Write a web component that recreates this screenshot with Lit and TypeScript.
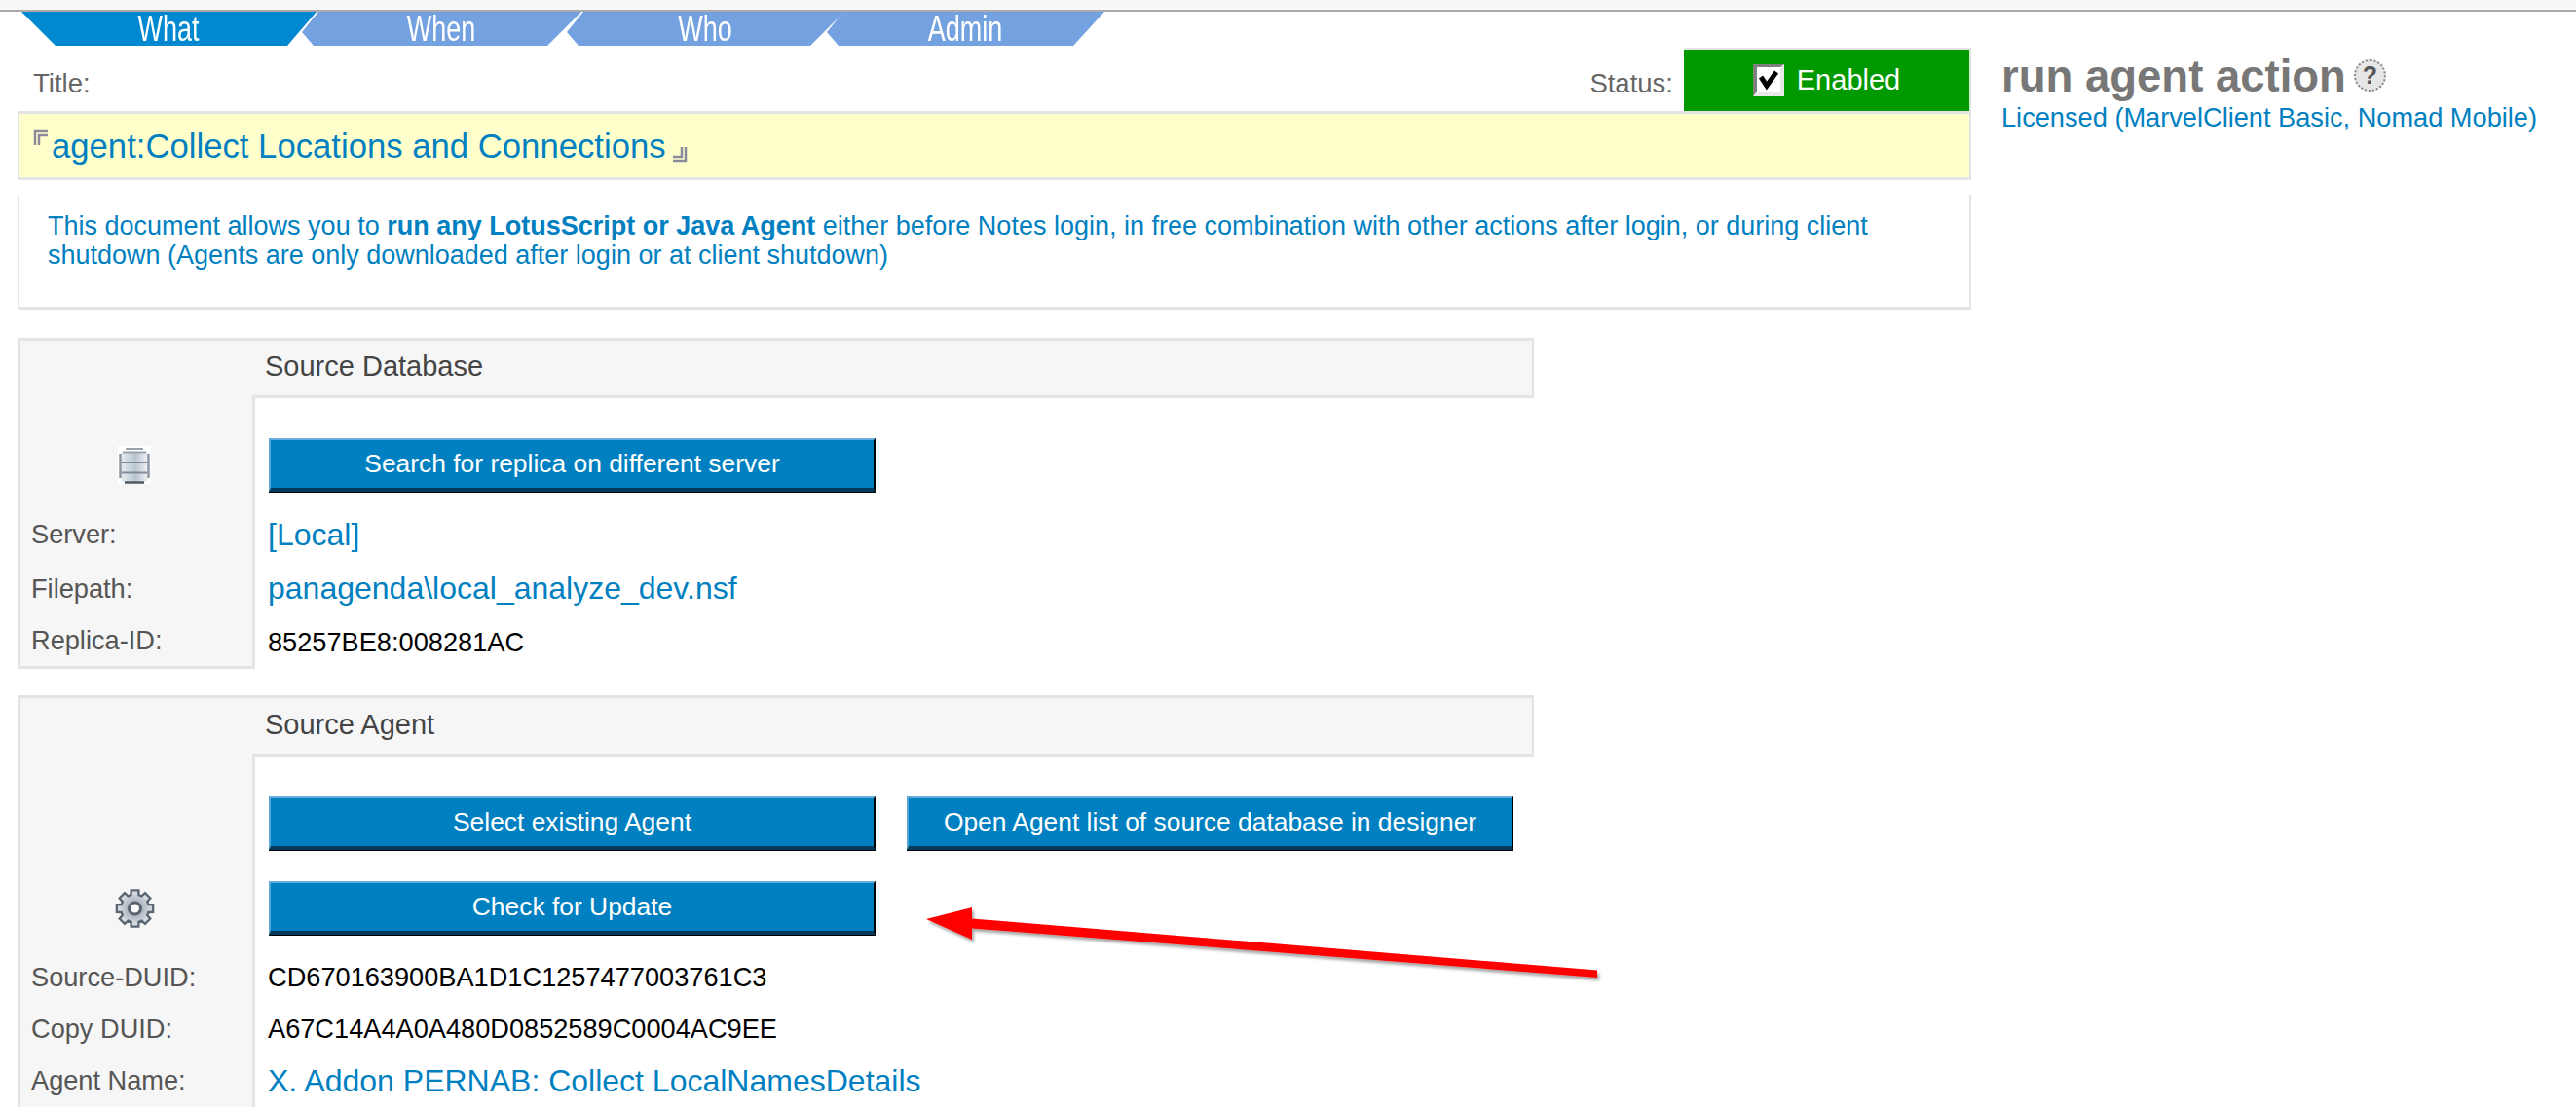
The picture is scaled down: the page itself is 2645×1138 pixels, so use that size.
import { LitElement, html, css, svg } from "lit";
import { customElement } from "lit/decorators.js";

const gearPath = (() => {
  const cx = 20.5, cy = 20, teeth = 8;
  let d = "";
  for (let i = 0; i < teeth; i++) {
    const a = (i / teeth) * Math.PI * 2 - Math.PI / 2;
    const pts: [number, number][] = [
      [14.5, -0.28],
      [19, -0.2],
      [19, 0.2],
      [14.5, 0.28],
    ];
    for (const [r, o] of pts) {
      const x = cx + r * Math.cos(a + o);
      const y = cy + r * Math.sin(a + o);
      d += (d ? "L" : "M") + x.toFixed(1) + " " + y.toFixed(1);
    }
  }
  return d + "Z";
})();

@customElement("app-root")
export class AppRoot extends LitElement {
  static styles = css`
    :host {
      display: block;
      position: relative;
      height: 1138px;
      overflow: hidden;
      background: #fff;
      font-family: "Liberation Sans", Arial, sans-serif;
      color: #666;
    }
    .strip {
      height: 10px;
      background: #f8f8f8;
      border-bottom: 2px solid #aaa;
    }
    .tabs {
      display: flex;
      height: 35px;
      padding-left: 22px;
    }
    .tab {
      display: flex;
      align-items: center;
      justify-content: center;
      color: #fff;
      background: #74a2e0;
      height: 35px;
    }
    .tab span {
      display: block;
      font-size: 36px;
      line-height: 35px;
      transform: scaleX(0.75);
    }
    .tab.what {
      width: 303px;
      background: #0088d0;
      clip-path: polygon(0 0, 100% 0, 273px 100%, 35px 100%);
    }
    .tab.when {
      width: 287px;
      margin-left: -15px;
      clip-path: polygon(17px 0, 100% 0, 252px 100%, 12px 100%, 0 60%);
    }
    .tab.who {
      width: 285px;
      margin-left: -15px;
      clip-path: polygon(17px 0, 100% 0, 250px 100%, 12px 100%, 0 60%);
    }
    .tab.admin {
      width: 285px;
      margin-left: -18px;
      clip-path: polygon(17px 0, 100% 0, 253px 100%, 12px 100%, 0 60%);
    }
    .main {
      display: flex;
      gap: 31px;
      padding: 2px 0 0 18px;
    }
    .left {
      width: 2006px;
      flex: none;
    }
    .status-row {
      display: flex;
      align-items: center;
      height: 65px;
      padding-left: 16px;
      font-size: 27.5px;
    }
    .status-row .lbl {
      padding-top: 9px;
    }
    .status-row .grow {
      flex: 1;
    }
    .status-row .st {
      margin-right: 11px;
    }
    .status {
      box-sizing: border-box;
      width: 295px;
      height: 65px;
      display: flex;
      align-items: center;
      justify-content: center;
      gap: 13px;
      background: #009900;
      border-top: 2px solid #e4e4e4;
      border-right: 2px solid #d8e8d8;
      color: #fff;
      font-size: 29px;
    }
    .check {
      box-sizing: border-box;
      width: 32px;
      height: 33px;
      background: #fff;
      border-style: solid;
      border-width: 3px 4px 5px 4px;
      border-color: #808080 #e8e8e8 #e8e8e8 #808080;
      display: block;
    }
    .check svg {
      display: block;
    }
    .title-box {
      box-sizing: border-box;
      height: 71px;
      background: #ffffcc;
      border: solid #e4e4e4;
      border-width: 3px 2px 3px 2px;
      display: flex;
      align-items: center;
      padding-left: 14px;
      color: #0080c0;
      font-size: 34.7px;
      margin-bottom: 15px;
    }
    .title-box .open {
      align-self: flex-start;
      margin: 16px 3px 0 0;
    }
    .title-box .close {
      align-self: flex-end;
      margin: 0 0 15px 6px;
    }
    .title-box svg {
      display: block;
    }
    .title-box .txt {
      line-height: 40px;
      padding-top: 1px;
    }
    .desc {
      box-sizing: border-box;
      height: 118px;
      border: solid #e4e4e4;
      border-width: 0 2px 3px 2px;
      padding: 17px 29px 0;
      color: #0080c0;
      font-size: 27px;
      line-height: 30px;
    }
    .panel {
      width: 1557px;
      margin-top: 29px;
      display: grid;
      grid-template-columns: 241px 1fr;
      font-size: 27.2px;
    }
    .panel.second {
      margin-top: 27px;
    }
    .cell {
      box-sizing: border-box;
      display: flex;
      align-items: center;
    }
    .side {
      background: #f6f6f6;
      border-left: 3px solid #e4e4e4;
      padding-left: 11px;
      color: #555;
    }
    .side.hd {
      border-top: 3px solid #e4e4e4;
    }
    .side.last {
      border-bottom: 3px solid #e4e4e4;
    }
    .side.ic {
      align-items: flex-end;
      justify-content: center;
      padding: 0 4px 24px 0;
    }
    .head {
      background: #f6f6f6;
      border: solid #e4e4e4;
      border-width: 3px 2px 3px 0;
      padding: 0 0 3px 13px;
      color: #444;
      font-size: 29px;
      height: 62px;
    }
    .second .head {
      height: 63px;
    }
    .val {
      border-left: 3px solid #e4e4e4;
      padding-left: 13px;
      color: #000;
    }
    .val.link {
      color: #0080c0;
      font-size: 32px;
    }
    .act {
      border-left: 3px solid #e4e4e4;
      padding: 41px 0 16px 14px;
      display: flex;
      flex-wrap: wrap;
      align-items: flex-start;
      align-content: flex-start;
      gap: 32px;
    }
    .second .act {
      padding-bottom: 17px;
    }
    .btn {
      box-sizing: border-box;
      width: 623px;
      height: 55px;
      background: #0080c0;
      color: #fff;
      display: flex;
      align-items: center;
      justify-content: center;
      font-size: 26.4px;
      border-style: solid;
      border-width: 2px 2px 4px 2px;
      border-color: #66aedb #000 #023a5c #58a6d6;
      box-shadow: 0 1px 0 #000;
    }
    .h53 {
      height: 53px;
    }
    .h54 {
      height: 54px;
    }
    .h55 {
      height: 55px;
    }
    .h56 {
      height: 56px;
    }
    .right {
      padding-top: 4px;
    }
    .right h1 {
      margin: 0;
      display: flex;
      align-items: center;
      gap: 8px;
      font-size: 45.5px;
      line-height: 52px;
      font-weight: 700;
      color: #777;
    }
    .help {
      box-sizing: border-box;
      width: 33px;
      height: 33px;
      border-radius: 50%;
      border: 2px dotted #888;
      background: #e6e6e6;
      color: #555;
      font-size: 25px;
      line-height: 29px;
      text-align: center;
      font-weight: 700;
      margin-top: -4px;
    }
    .lic {
      color: #0080c0;
      font-size: 27.2px;
      line-height: 32px;
    }
    .arrow {
      position: absolute;
      left: 0;
      top: 0;
      pointer-events: none;
    }
  `;

  private corner(flip: boolean) {
    return html`<svg width="16" height="17" viewBox="0 0 16 17" class=${flip ? "close" : "open"}>
      <path
        d=${flip ? "M14 1V15H1M10 1V11H1" : "M2 16V2H15M6 16V6H15"}
        fill="none"
        stroke="#8a8a9a"
        stroke-width="2.5"
      ></path>
    </svg>`;
  }

  private dbIcon() {
    return html`<svg width="34" height="39" viewBox="0 0 34 39">
      <defs>
        <linearGradient id="dbg" x1="0" x2="1" y1="0" y2="0">
          <stop offset="0" stop-color="#e9edf0"></stop>
          <stop offset=".55" stop-color="#b9c6d1"></stop>
          <stop offset="1" stop-color="#f2f4f6"></stop>
        </linearGradient>
      </defs>
      <rect width="34" height="39" fill="#fff"></rect>
      <rect x="3" y="6" width="28" height="31" rx="3" fill="url(#dbg)"></rect>
      <path d="M2.5 8V33M31.5 8V33" stroke="#8c98a3" stroke-width="2.5"></path>
      <path d="M8 3H26M5 6.5H29" stroke="#98a3ad" stroke-width="2"></path>
      <path d="M4 17H30M4 27.5H30" stroke="#808c97" stroke-width="2"></path>
      <path d="M7 37.5H27" stroke="#4d5862" stroke-width="2.5"></path>
    </svg>`;
  }

  private gearIcon() {
    return html`<svg width="41" height="40" viewBox="0 0 41 40">
      <defs>
        <radialGradient id="grg">
          <stop offset="0.3" stop-color="#a3aeb9"></stop>
          <stop offset="1" stop-color="#e2e6ea"></stop>
        </radialGradient>
      </defs>
      <path d=${gearPath} fill="url(#grg)" stroke="#5a6672" stroke-width="2.4"></path>
      <circle cx="20.5" cy="20" r="6" fill="#fff" stroke="#56626e" stroke-width="3"></circle>
    </svg>`;
  }

  render() {
    return html`
      <div class="strip"></div>
      <div class="tabs">
        <div class="tab what"><span>What</span></div>
        <div class="tab when"><span>When</span></div>
        <div class="tab who"><span>Who</span></div>
        <div class="tab admin"><span>Admin</span></div>
      </div>
      <div class="main">
        <div class="left">
          <div class="status-row">
            <span class="lbl">Title:</span>
            <span class="grow"></span>
            <span class="lbl st">Status:</span>
            <div class="status">
              <span class="check">
                <svg width="24" height="25" viewBox="0 0 24 25">
                  <path d="M4 10L10 19L20 5" fill="none" stroke="#000" stroke-width="5"></path>
                </svg>
              </span>
              <span>Enabled</span>
            </div>
          </div>
          <div class="title-box">
            ${this.corner(false)}
            <span class="txt">agent:Collect Locations and Connections</span>
            ${this.corner(true)}
          </div>
          <div class="desc">
            This document allows you to <b>run any LotusScript or Java Agent</b> either before Notes login, in free combination with other actions after login, or during client<br />
            shutdown (Agents are only downloaded after login or at client shutdown)
          </div>

          <div class="panel">
            <div class="cell side hd"></div>
            <div class="cell head">Source Database</div>
            <div class="cell side ic">${this.dbIcon()}</div>
            <div class="act"><div class="btn">Search for replica on different server</div></div>
            <div class="cell side h56">Server:</div>
            <div class="cell val link">[Local]</div>
            <div class="cell side h55">Filepath:</div>
            <div class="cell val link">panagenda\\local_analyze_dev.nsf</div>
            <div class="cell side last h55">Replica-ID:</div>
            <div class="cell val">85257BE8:008281AC</div>
          </div>

          <div class="panel second">
            <div class="cell side hd"></div>
            <div class="cell head">Source Agent</div>
            <div class="cell side ic">${this.gearIcon()}</div>
            <div class="act">
              <div class="btn">Select existing Agent</div>
              <div class="btn">Open Agent list of source database in designer</div>
              <div class="btn">Check for Update</div>
            </div>
            <div class="cell side h53">Source-DUID:</div>
            <div class="cell val">CD670163900BA1D1C1257477003761C3</div>
            <div class="cell side h53">Copy DUID:</div>
            <div class="cell val">A67C14A4A0A480D0852589C0004AC9EE</div>
            <div class="cell side h54">Agent Name:</div>
            <div class="cell val link">X. Addon PERNAB: Collect LocalNamesDetails</div>
          </div>
        </div>
        <div class="right">
          <h1>run agent action<span class="help">?</span></h1>
          <div class="lic">Licensed (MarvelClient Basic, Nomad Mobile)</div>
        </div>
      </div>
      <svg class="arrow" width="2645" height="1138" viewBox="0 0 2645 1138">
        <defs>
          <filter id="sh" x="-5%" y="-20%" width="110%" height="140%">
            <feDropShadow dx="2" dy="3" stdDeviation="1.5" flood-color="#000" flood-opacity=".35"></feDropShadow>
          </filter>
        </defs>
        ${svg`<path filter="url(#sh)" fill="#ff0000" d="M951 944L998 932L998 943.5L1640 996.5L1640 1004L998 953.5L998 965Z"></path>`}
      </svg>
    `;
  }
}
